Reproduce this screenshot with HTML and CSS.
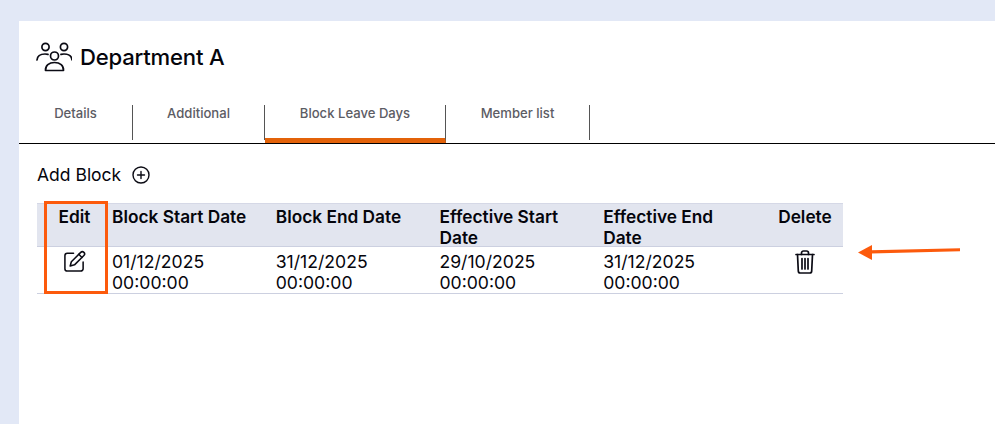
FILE: index.html
```html
<!DOCTYPE html>
<html lang="en">
<head>
<meta charset="utf-8">
<title>Department A</title>
<link rel="stylesheet" href="styles.css">
</head>
<body>
<main class="card">
  <header class="title-row">
    <svg class="people-icon" viewBox="0 0 36 30" fill="none" stroke="#0b0b14" stroke-width="1.7" stroke-linecap="round" stroke-linejoin="round">
      <circle cx="9.5" cy="5" r="3.6"/>
      <circle cx="28" cy="5" r="3.6"/>
      <circle cx="18.5" cy="14" r="4"/>
      <path d="M1 18c.3-4 3.400-6 8-6 1 0 2 .1 3 .4"/>
      <path d="M25 12.400c1-.3 2-.4 3-.4 4.600 0 7.700 2 8 6"/>
      <path d="M9.500 28.500c-.3-5 3.500-8 9-8s9.300 3 9 8z"/>
    </svg>
    <h1 class="title">Department A</h1>
  </header>
  <nav class="tabs">
    <a class="tab tab-details">Details</a>
    <a class="tab tab-additional">Additional</a>
    <a class="tab tab-block active">Block Leave Days</a>
    <a class="tab tab-member">Member list</a>
  </nav>
  <section class="content">
    <div class="add-row">
      <span>Add Block</span>
      <svg class="plus-icon" viewBox="0 0 18 18" fill="none" stroke="#0b0b14" stroke-width="1.400" stroke-linecap="round">
        <circle cx="9" cy="9" r="8"/>
        <path d="M9 5.500v7M5.500 9h7"/>
      </svg>
    </div>
    <table class="grid">
      <colgroup>
        <col class="col-edit">
        <col class="col-date">
        <col class="col-date">
        <col class="col-date">
        <col class="col-date">
        <col class="col-delete">
      </colgroup>
      <thead>
        <tr>
          <th class="center"><div class="th-label">Edit</div></th>
          <th><div class="th-label">Block Start Date</div></th>
          <th><div class="th-label">Block End Date</div></th>
          <th><div class="th-label">Effective Start Date</div></th>
          <th><div class="th-label">Effective End Date</div></th>
          <th class="center"><div class="th-label">Delete</div></th>
        </tr>
      </thead>
      <tbody>
        <tr>
          <td class="center">
            <svg class="row-icon" viewBox="0 0 24 24" fill="none" stroke="#0b0b14" stroke-width="1.600" stroke-linecap="round" stroke-linejoin="round">
              <path d="M11 3.500H4.500A2.500 2.500 0 0 0 2 6v13.500A2.500 2.500 0 0 0 4.500 22h14a2.500 2.500 0 0 0 2.500-2.500V12.500"/>
              <path d="M18.500 2.500a2.300 2.300 0 0 1 3.300 3.300L12 15.500l-4.500 1.200 1.200-4.500z"/>
              <path d="M16.500 4.500l3.300 3.300"/>
            </svg>
          </td>
          <td>01/12/2025 00:00:00</td>
          <td>31/12/2025 00:00:00</td>
          <td>29/10/2025 00:00:00</td>
          <td>31/12/2025 00:00:00</td>
          <td class="center">
            <svg class="row-icon trash" viewBox="0 0 20 24" fill="none" stroke="#0b0b14" stroke-width="1.700" stroke-linecap="round" stroke-linejoin="round">
              <path d="M1 4.500h18"/>
              <path d="M6.500 4.500V3a2 2 0 0 1 2-2h3a2 2 0 0 1 2 2v1.500"/>
              <path d="M2.500 4.500l.8 16.500a2 2 0 0 0 2 2h9.400a2 2 0 0 0 2-2l.8-16.500"/>
              <path d="M7 8.500v10.500M10 8.500v10.500M13 8.500v10.500"/>
            </svg>
          </td>
        </tr>
      </tbody>
    </table>
  </section>
  <div class="edit-highlight"></div>
  <svg class="arrow" viewBox="0 0 104 16">
    <path d="M102 3.300L13 5.300V8.500L102 6.200z" fill="#fc5a0c"/>
    <path d="M0 7.500L14 0v15z" fill="#fc5a0c"/>
  </svg>
</main>
</body>
</html>
```
FILE: styles.css
```css
* { box-sizing: border-box; }

html, body { height: 100%; }

body {
  margin: 0;
  padding: 21px 0 0 19px;
  background: #e2e8f6;
  font-family: Inter, "Liberation Sans", sans-serif;
  color: #05050c;
  overflow: hidden;
}

.card {
  position: relative;
  height: 100%;
  background: #fff;
}

.title-row {
  display: flex;
  align-items: center;
  gap: 8px;
  height: 84px;
  padding: 0 0 12px 17px;
}

.people-icon { width: 36px; height: 30px; flex: none; }

.title {
  margin: 0;
  font-size: 22.100px;
  font-weight: 500;
  line-height: 28px;
  letter-spacing: -0.2px;
}

.tabs {
  display: flex;
  height: 39px;
  border-bottom: 1px solid #000;
}

.tab {
  height: 35px;
  border-right: 1px solid #555;
  color: #5c5c64;
  font-size: 13.100px;
  font-weight: 500;
  line-height: 17px;
  text-align: center;
}

.tab-details { width: 114px; }
.tab-additional { width: 132px; }
.tab-block { width: 181px; }
.tab-member { width: 144px; }

.tab.active {
  height: 38px;
  border-bottom: 5px solid #e36209;
}

.content { padding: 20px 0 0 18px; }

.add-row {
  display: flex;
  align-items: center;
  gap: 11px;
  height: 22px;
  font-size: 17.500px;
  line-height: 22px;
}

.plus-icon { width: 18px; height: 18px; flex: none; }

.grid {
  width: 806px;
  margin-top: 17px;
  border-collapse: collapse;
  table-layout: fixed;
  font-size: 17.600px;
  line-height: 21px;
}

.col-edit { width: 73px; }
.col-date { width: 163.700px; }
.col-delete { width: 78px; }

.grid th {
  padding: 0 12px 0 2px;
  background: #e2e5ef;
  border-top: 1px solid #d5d8e6;
  border-bottom: 1px solid #ccd0e0;
  font-size: 17.300px;
  font-weight: 600;
  text-align: left;
  vertical-align: top;
}

.th-label { margin: 2px 0 -2px; }

.grid th.center { padding: 0 2px 0 4px; }

.grid td {
  padding: 4px 2px 0;
  height: 46px;
  border-bottom: 1px solid #ccd0e0;
  vertical-align: top;
}

.grid .center { text-align: center; }

.grid td.center { padding-left: 4px; }

.row-icon {
  display: block;
  width: 23px;
  height: 23px;
  margin: -1px auto 0;
}

.row-icon.trash { width: 20px; height: 24px; margin-top: -1px; }

.edit-highlight {
  position: absolute;
  left: 25px;
  top: 180px;
  width: 64px;
  height: 93px;
  border: 3px solid #fc5a0c;
}

.arrow {
  position: absolute;
  left: 839px;
  top: 224px;
  width: 104px;
  height: 16px;
}
```
